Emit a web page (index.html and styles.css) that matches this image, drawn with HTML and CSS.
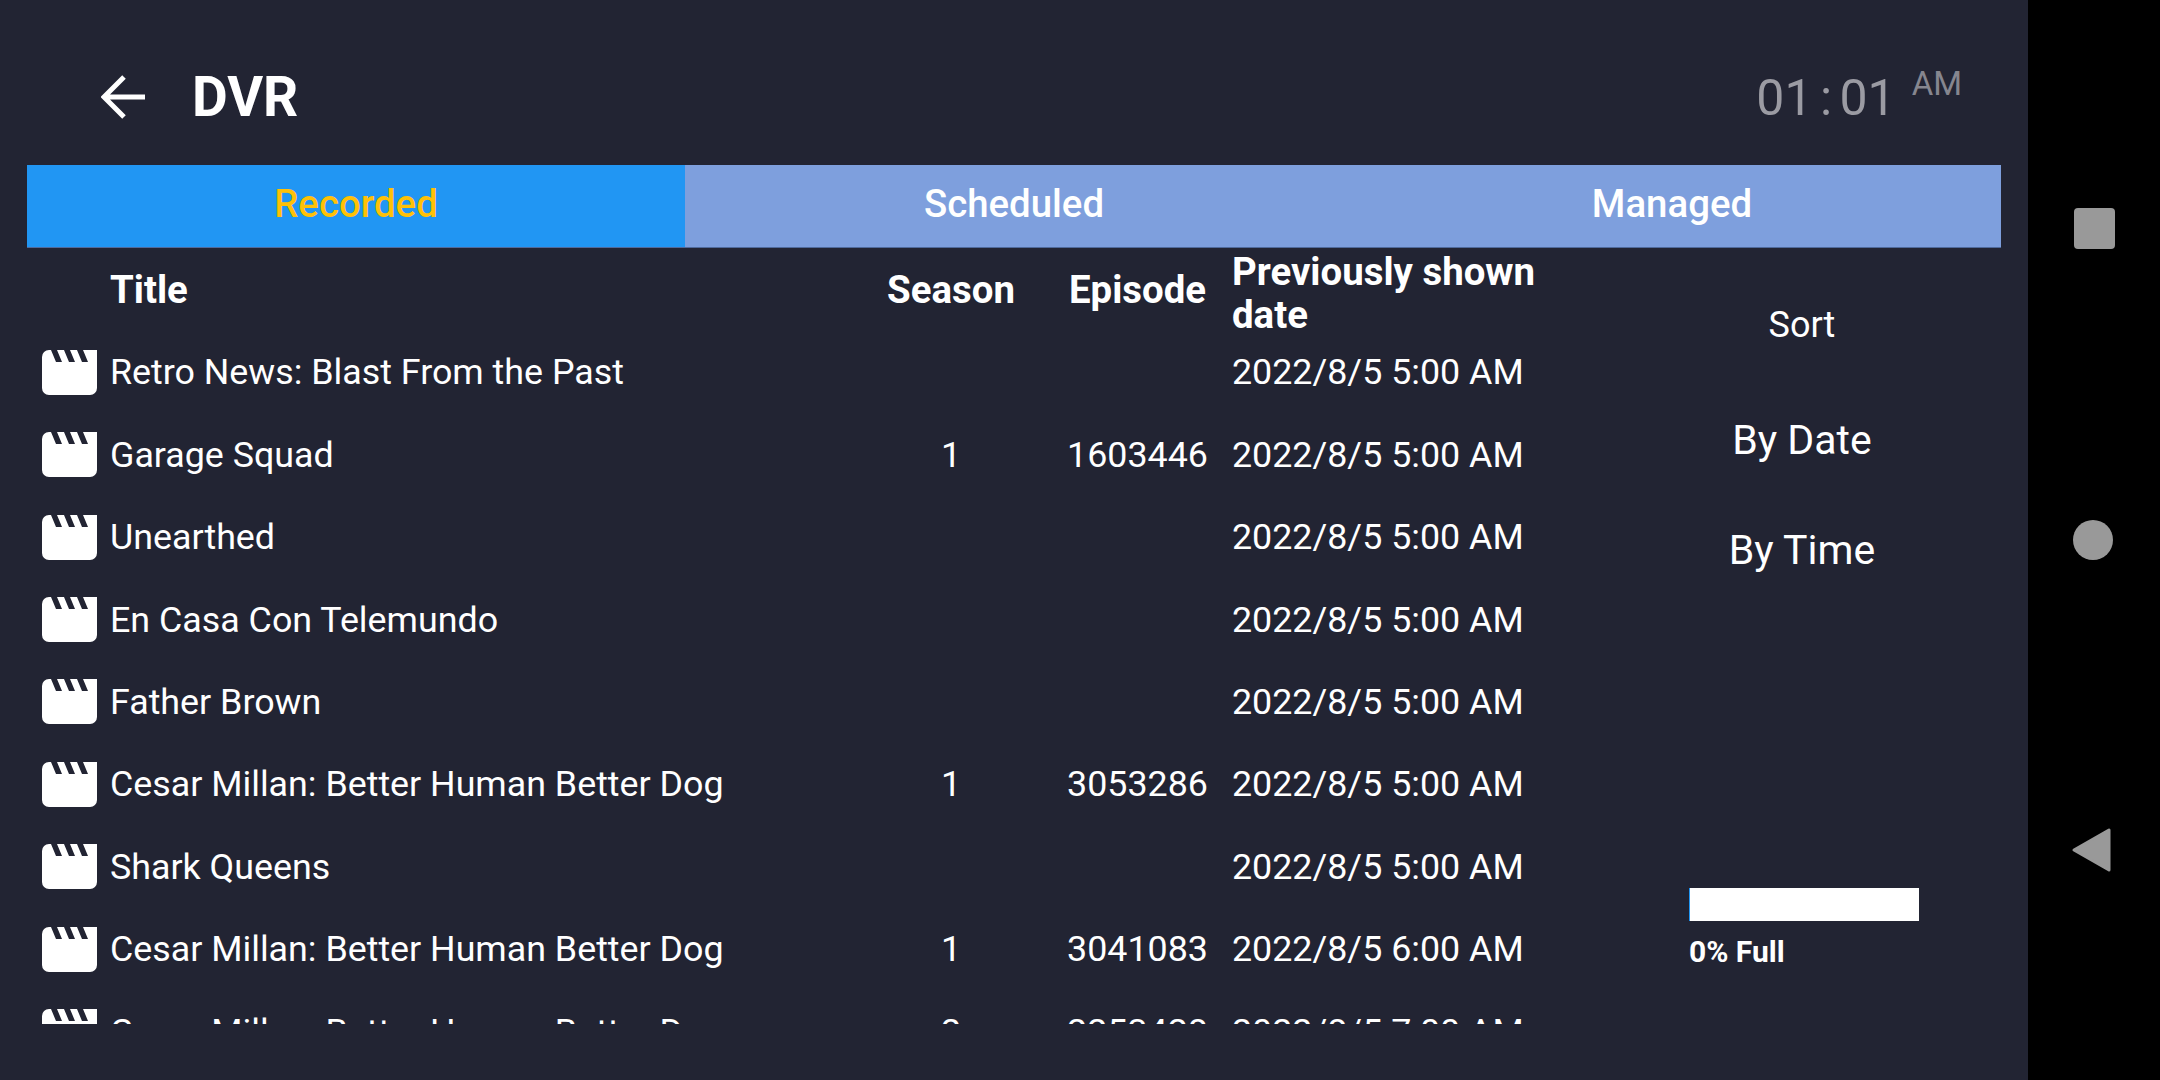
FILE: index.html
```html
<!DOCTYPE html>
<html lang="en">
<head>
  <meta charset="UTF-8">
  <meta name="viewport" content="width=device-width, initial-scale=1.0">
  <title>DVR</title>
  <link rel="stylesheet" href="styles.css">
</head>
<body>
  <svg class="sprite" width="0" height="0">
    <symbol id="movie" viewBox="0 0 55 45">
      <path d="M7 0H9L14 12H20L15 0H22L27 12H33L28 0H35L40 12H46L41 0H55V38A7 7 0 0 1 48 45H7A7 7 0 0 1 0 38V7A7 7 0 0 1 7 0Z"/>
    </symbol>
  </svg>
  <div class="app">
    <div class="main">
      <div class="header">
        <div class="header-left">
          <svg class="back" viewBox="0 0 46 46" width="46" height="46">
            <path d="M44 23H4M23 3L3 23L23 43" fill="none" stroke="#fff" stroke-width="5"/>
          </svg>
          <h1>DVR</h1>
        </div>
        <div class="clock">
          <span class="time">01 : 01</span>
          <span class="ampm">AM</span>
        </div>
      </div>
      <div class="tabs">
        <div class="tab selected">Recorded</div>
        <div class="tab">Scheduled</div>
        <div class="tab">Managed</div>
      </div>
      <div class="content">
        <div class="list">
          <div class="row head">
            <div></div>
            <div class="head-single">Title</div>
            <div class="center head-single">Season</div>
            <div class="center head-single">Episode</div>
            <div class="head-date">Previously shown date</div>
          </div>
          <div class="row">
            <svg class="icon"><use href="#movie"/></svg>
            <div>Retro News: Blast From the Past</div>
            <div class="center"></div>
            <div class="center"></div>
            <div>2022/8/5 5:00 AM</div>
          </div>
          <div class="row">
            <svg class="icon"><use href="#movie"/></svg>
            <div>Garage Squad</div>
            <div class="center">1</div>
            <div class="center">1603446</div>
            <div>2022/8/5 5:00 AM</div>
          </div>
          <div class="row">
            <svg class="icon"><use href="#movie"/></svg>
            <div>Unearthed</div>
            <div class="center"></div>
            <div class="center"></div>
            <div>2022/8/5 5:00 AM</div>
          </div>
          <div class="row">
            <svg class="icon"><use href="#movie"/></svg>
            <div>En Casa Con Telemundo</div>
            <div class="center"></div>
            <div class="center"></div>
            <div>2022/8/5 5:00 AM</div>
          </div>
          <div class="row">
            <svg class="icon"><use href="#movie"/></svg>
            <div>Father Brown</div>
            <div class="center"></div>
            <div class="center"></div>
            <div>2022/8/5 5:00 AM</div>
          </div>
          <div class="row">
            <svg class="icon"><use href="#movie"/></svg>
            <div>Cesar Millan: Better Human Better Dog</div>
            <div class="center">1</div>
            <div class="center">3053286</div>
            <div>2022/8/5 5:00 AM</div>
          </div>
          <div class="row">
            <svg class="icon"><use href="#movie"/></svg>
            <div>Shark Queens</div>
            <div class="center"></div>
            <div class="center"></div>
            <div>2022/8/5 5:00 AM</div>
          </div>
          <div class="row">
            <svg class="icon"><use href="#movie"/></svg>
            <div>Cesar Millan: Better Human Better Dog</div>
            <div class="center">1</div>
            <div class="center">3041083</div>
            <div>2022/8/5 6:00 AM</div>
          </div>
          <div class="row">
            <svg class="icon"><use href="#movie"/></svg>
            <div>Cesar Millan: Better Human Better Dog</div>
            <div class="center">2</div>
            <div class="center">2253428</div>
            <div>2022/8/5 7:00 AM</div>
          </div>
        </div>
        <div class="side">
          <div class="sort-label">Sort</div>
          <div class="sort-btn">By Date</div>
          <div class="sort-btn">By Time</div>
          <div class="storage">
            <div class="bar"></div>
            <div class="bar-text">0% Full</div>
          </div>
        </div>
      </div>
    </div>
    <div class="navbar">
      <div class="nav-square"></div>
      <div class="nav-circle"></div>
      <svg class="nav-back" viewBox="0 0 40 46" width="40" height="46">
        <path d="M38 3V43L3 23Z" fill="#999" stroke="#999" stroke-width="3" stroke-linejoin="round"/>
      </svg>
    </div>
  </div>
</body>
</html>
```

FILE: styles.css
```css
body {
  margin: 0;
  background-color: #000;
  font-family: 'Roboto', 'Liberation Sans', sans-serif;
  color: #fff;
}

.sprite {
  display: block;
}

.app {
  display: flex;
  width: 2160px;
  height: 1080px;
  overflow: hidden;
}

.main {
  width: 2028px;
  height: 1080px;
  background-color: #222433;
  padding: 0 27px;
  box-sizing: border-box;
}

.header {
  display: flex;
  justify-content: space-between;
  align-items: center;
  height: 165px;
  padding-top: 28px;
  box-sizing: border-box;
}

.header-left {
  display: flex;
  align-items: center;
  padding-left: 74px;
}

.back {
  margin-right: 45px;
}

h1 {
  font-size: 55px;
  font-weight: 700;
  margin: 0;
}

.clock {
  display: flex;
  align-items: flex-start;
  padding-right: 39px;
  color: #9b9ba3;
}

.time {
  font-size: 50px;
  word-spacing: -5px;
  margin: 3px 16px 0 0;
}

.ampm {
  font-size: 33px;
  color: #86868f;
  margin-top: -2px;
}

.tabs {
  display: flex;
  height: 83px;
  background-color: #7e9fdd;
  border-bottom: 1px solid #4f6a9c;
  box-sizing: border-box;
}

.tab {
  flex: 1;
  display: flex;
  justify-content: center;
  align-items: center;
  padding-bottom: 5px;
  font-size: 38.4px;
  font-weight: 500;
}

.tab.selected {
  background-color: #2196f3;
  color: #ffc107;
}

.content {
  display: flex;
}

.list {
  width: 1576px;
  height: 776px;
  overflow: hidden;
}

.row {
  display: grid;
  grid-template-columns: 83px 749px 184px 189px 1fr;
  align-items: center;
  height: 82.45px;
  font-size: 35.8px;
}

.row.head {
  height: 83px;
  font-size: 38.4px;
  font-weight: 700;
  line-height: 43px;
}

.head-single {
  padding-bottom: 6px;
}

.head-date {
  width: 340px;
  padding-top: 2px;
}

.center {
  text-align: center;
}

.icon {
  width: 55px;
  height: 45px;
  margin-left: 15px;
  fill: #fff;
}

.side {
  flex: 1;
  display: flex;
  flex-direction: column;
  align-items: center;
}

.sort-label {
  font-size: 36px;
  margin: 56px 0 8px;
}

.sort-btn {
  font-size: 41px;
  margin-top: 62px;
}

.storage {
  align-self: flex-start;
  margin: 314px 0 0 86px;
}

.bar {
  width: 230px;
  height: 33px;
  background-color: #fff;
  border-left: 1px solid #2196f3;
  box-sizing: border-box;
}

.bar-text {
  font-size: 30px;
  font-weight: 700;
  margin-top: 13px;
}

.navbar {
  flex: 1;
  display: flex;
  flex-direction: column;
  align-items: center;
  padding-top: 208px;
}

.nav-square {
  width: 41px;
  height: 41px;
  background-color: #999;
  border-radius: 4px;
}

.nav-circle {
  width: 40px;
  height: 40px;
  margin: 271px 2px 0 0;
  background-color: #999;
  border-radius: 50%;
}

.nav-back {
  margin: 267px 6px 0 0;
}
```
